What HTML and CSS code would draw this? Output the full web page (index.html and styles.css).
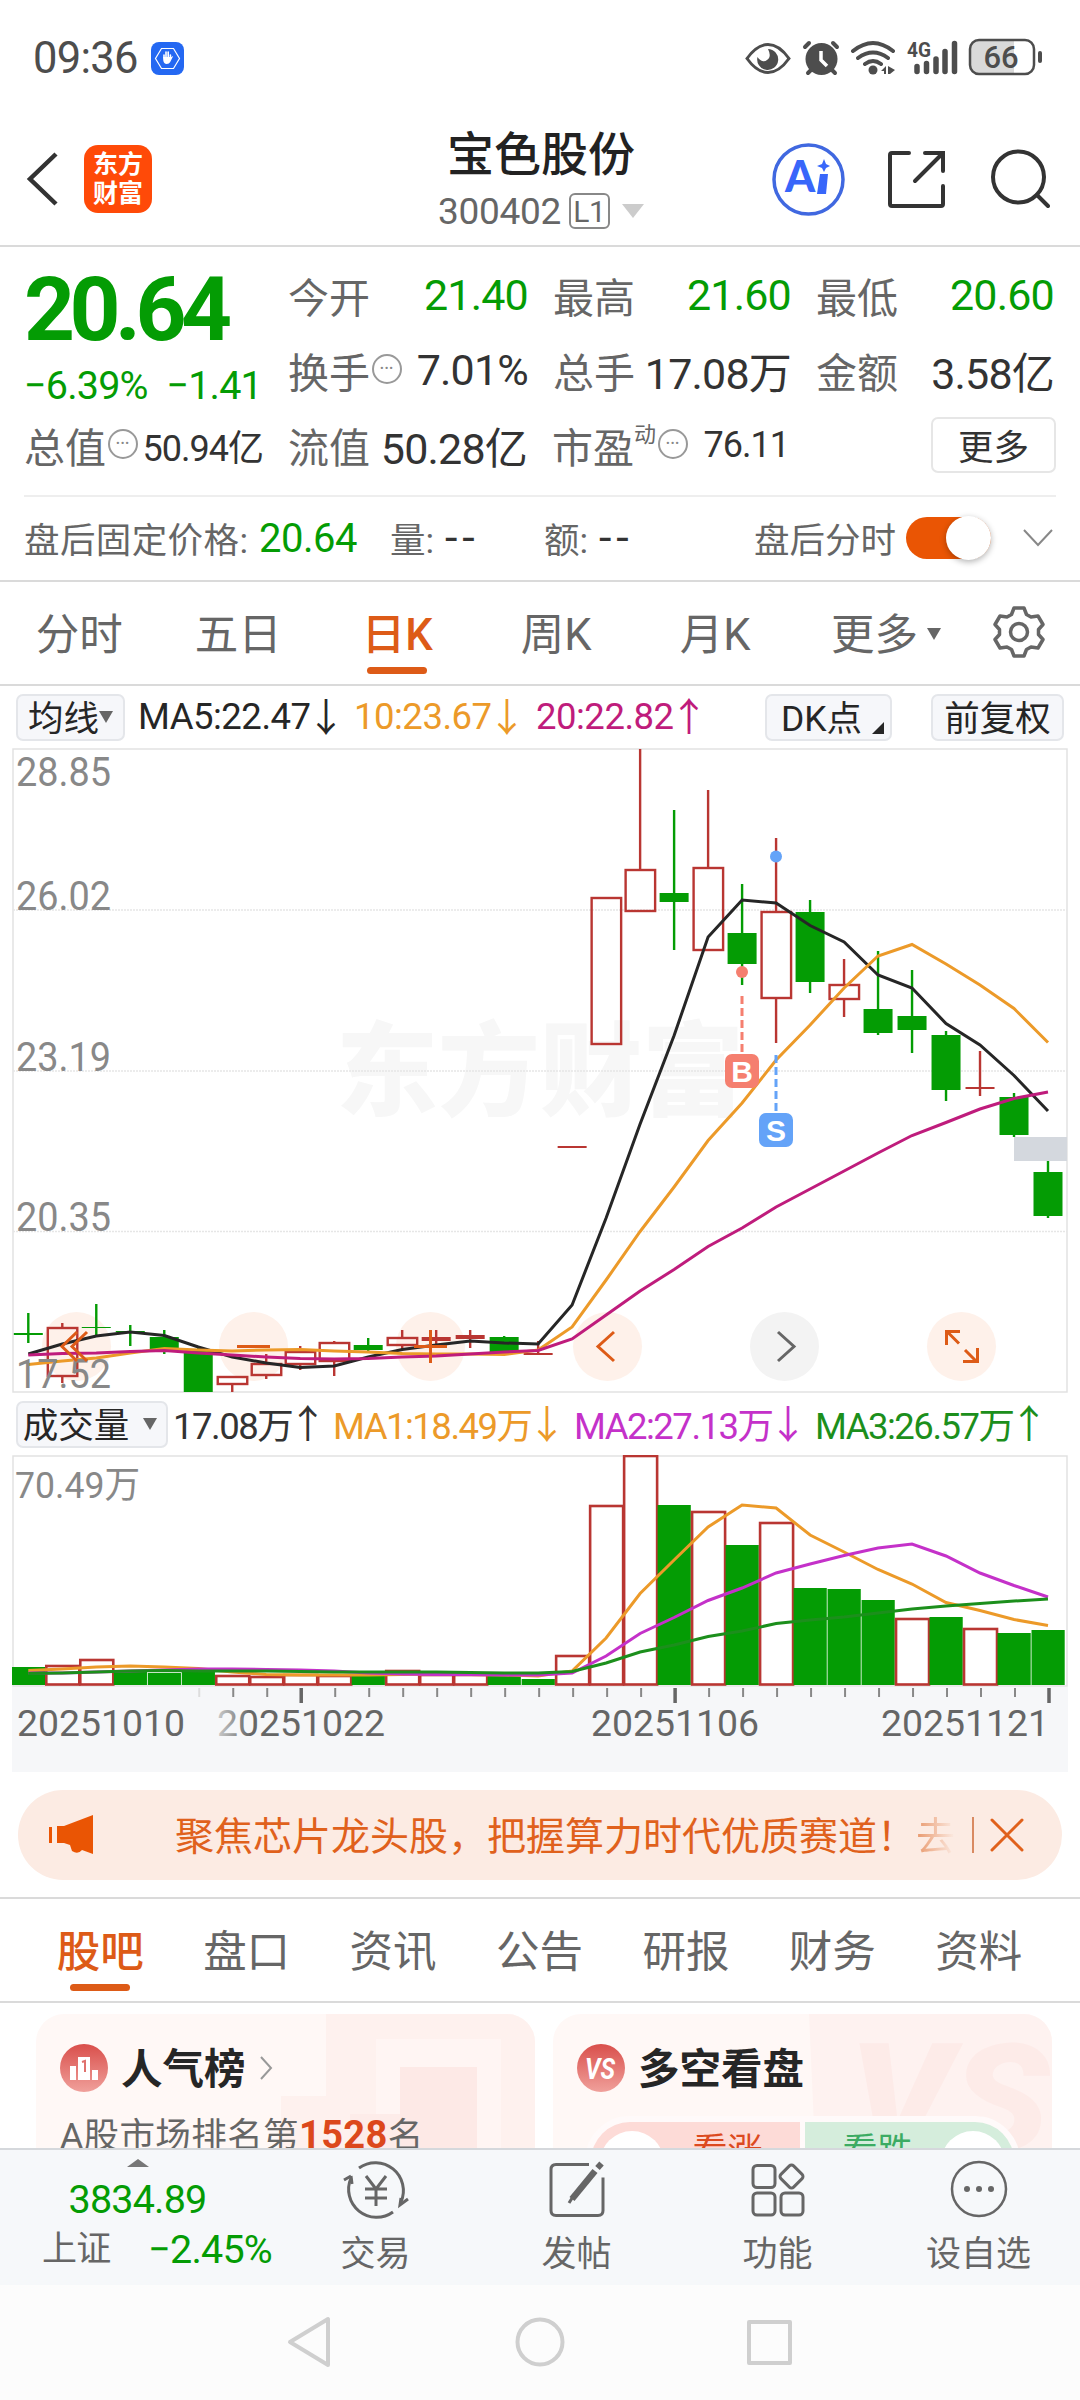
FILE: index.html
```html
<!DOCTYPE html>
<html lang="zh-CN">
<head>
  <meta charset="UTF-8">
  <meta name="viewport" content="width=device-width, initial-scale=1.0">
  <title>宝色股份 300402</title>
  <link rel="stylesheet" href="styles.css">
</head>
<body>
  <div class="status-bar">
    <span class="time">09:36</span>
    <svg class="badge" width="33" height="33" viewBox="0 0 33 33">
      <rect width="33" height="33" rx="8" fill="#2468f2"/>
      <path d="M10.500 6.500h12l6 10-6 10h-12l-6-10z" fill="none" stroke="#fff" stroke-width="1.200"/>
      <path d="M13 16v-3M15 15v-5M17.200 15v-5M19.400 16v-3" stroke="#fff" stroke-width="1.600" stroke-linecap="round"/>
      <path d="M12.200 15h8l2-1-3 6q-1 2-3.500 2-3 0-3.500-4z" fill="#fff"/>
    </svg>
    <svg class="status-icons" width="310" height="44" viewBox="740 36 310 44">
      <g fill="none" stroke="#4d4d4d" stroke-width="3">
        <path d="M747 58.500q10-14 21-14t21 14q-10 14-21 14t-21-14z"/>
        <g stroke-linecap="round" stroke-width="4">
          <path d="M805 47l4-4M837 47l-4-4M811 70l-3 3M832 70l3 3"/>
          <path d="M853 51q20-16 40 0M858 58q15-11 30 0M865 64q8-6 16 0"/>
        </g>
      </g>
      <path d="M768 49a10.500 10.500 0 1 1-10.500 8q3 5 8 4 7-3 2.500-12z" fill="#4d4d4d"/>
      <circle cx="821.500" cy="59" r="16" fill="#4d4d4d"/>
      <path d="M821 51v9l6 6" fill="none" stroke="#fff" stroke-width="3.500"/>
      <circle cx="873" cy="70" r="4.500" fill="#4d4d4d"/>
      <path d="M881 71l5-5v8h-2v-3zM888 66l7 4-5 4h-2z" fill="#4d4d4d"/>
      <text x="907" y="57" class="net" textLength="24" lengthAdjust="spacingAndGlyphs">4G</text>
      <path d="M917 66.500v5M926.500 63.500v8M936 59v12.500M945 51.500v20M954.500 43.500v28" stroke="#4d4d4d" stroke-width="5.500" stroke-linecap="round"/>
      <path d="M978 41h36v33h-36q-8 0-8-8v-17q0-8 8-8z" fill="#d9d9d9"/>
      <rect x="970" y="40" width="64" height="34" rx="9" fill="none" stroke="#4d4d4d" stroke-width="2.500"/>
      <rect x="1038" y="51" width="4" height="12" rx="2" fill="#4d4d4d"/>
      <text x="1001" y="68" text-anchor="middle" class="battery">66</text>
    </svg>
  </div>

  <header class="header">
    <svg class="back" width="34" height="56" viewBox="0 0 34 56"><path d="M30 3L4 28l26 25" fill="none" stroke="#333" stroke-width="4.500"/></svg>
    <div class="logo">东方<br>财富</div>
    <div class="stock">
      <h1>宝色股份</h1>
      <div class="code">300402<span class="level">L1</span><i class="tri"></i></div>
    </div>
    <svg class="actions" width="280" height="76" viewBox="770 141 280 76">
      <circle cx="808.500" cy="179.500" r="34.500" fill="none" stroke="#4068e0" stroke-width="3.500"/>
      <text x="785" y="192" class="ai">A</text>
      <path d="M820 174h8l-2 20h-9z" fill="#3866fa"/>
      <path d="M824 159l2 5 4 2-4 2-2 4-2-4-5-2 5-2z" fill="#3866fa"/>
      <g fill="none" stroke="#333" stroke-width="4" stroke-linecap="round">
        <path d="M909 153h-17q-2 0-2 2v49q0 2 2 2h49q2 0 2-2v-18M925 153h18v18M943 153l-28 28"/>
        <circle cx="1018.500" cy="177" r="25.500"/>
        <path d="M1037 195l11 11"/>
      </g>
    </svg>
  </header>

  <section class="quote">
    <div class="price-col">
      <div class="price green">20.64</div>
      <div class="change green"><span>−6.39%</span><span>−1.41</span></div>
    </div>
    <div class="cells">
      <div class="cell"><label>今开</label><b class="green">21.40</b></div>
      <div class="cell"><label>最高</label><b class="green">21.60</b></div>
      <div class="cell"><label>最低</label><b class="green">20.60</b></div>
      <div class="cell"><label>换手</label><i class="dots">•••</i><b>7.01%</b></div>
      <div class="cell"><label>总手</label><b>17.08万</b></div>
      <div class="cell"><label>金额</label><b>3.58亿</b></div>
    </div>
    <div class="last-row">
      <div class="cell"><label>总值</label><i class="dots">•••</i><b class="small">50.94亿</b></div>
      <div class="cell"><label>流值</label><b>50.28亿</b></div>
      <div class="cell"><label>市盈<sup>动</sup></label><i class="dots">•••</i><b class="small">76.11</b></div>
      <div class="cell"><button class="more">更多</button></div>
    </div>
  </section>

  <section class="after">
    <span class="w1">盘后固定价格:</span><b class="w2 green">20.64</b>
    <span class="w3">量: <b>--</b></span><span class="w4">额: <b>--</b></span>
    <span class="w5">盘后分时</span>
    <div class="toggle"><i></i></div>
    <svg width="30" height="18" viewBox="0 0 30 18"><path d="M1 1l14 15L29 1" fill="none" stroke="#888" stroke-width="2"/></svg>
  </section>

  <nav class="period">
    <span>分时</span><span>五日</span><span class="active">日K</span><span>周K</span><span>月K</span>
    <span class="period-more">更多<i class="tri"></i></span>
    <svg width="54" height="54" viewBox="-27 -27 54 54">
      <path d="M-5-24H5L7.500-17.500 12-15 19-16 24-7.500 19.500-2.500V2.500L24 7.500 19 16 12 15 7.500 17.500 5 24H-5L-7.500 17.500-12 15-19 16-24 7.500-19.500 2.500V-2.500L-24-7.500-19-16-12-15-7.500-17.500z" fill="none" stroke="#666" stroke-width="3.500" stroke-linejoin="round"/>
      <circle r="8.500" fill="none" stroke="#666" stroke-width="3.500"/>
    </svg>
  </nav>

  <div class="ma-row">
    <span class="chip chip-ma">均线<i class="tri"></i></span>
    <span class="ma ma5">MA5:22.47<i>↓</i></span>
    <span class="ma ma10">10:23.67<i>↓</i></span>
    <span class="ma ma20">20:22.82<i>↑</i></span>
    <span class="chip chip-dk">DK点<i class="corner"></i></span>
    <span class="chip chip-fq">前复权</span>
  </div>

  <svg id="kline" class="kline" width="1056" height="645" viewBox="12 748 1056 645"></svg>

  <div class="vol-row">
    <span class="chip chip-vol">成交量<i class="tri"></i></span>
    <span class="ma v0">17.08万<i>↑</i></span>
    <span class="ma v1">MA1:18.49万<i>↓</i></span>
    <span class="ma v2">MA2:27.13万<i>↓</i></span>
    <span class="ma v3">MA3:26.57万<i>↑</i></span>
  </div>

  <svg id="volume" class="volume" width="1056" height="232" viewBox="12 1455 1056 232"></svg>
  <svg id="dates" class="dates" width="1056" height="85" viewBox="12 1687 1056 85"></svg>

  <div class="banner">
    <svg width="46" height="42" viewBox="0 0 46 42"><path d="M1 13h3v16H1zM9 12h7L45 1v39l-11-4q-4 5-10 1l-2-6-6-2H9z" fill="#ea5504"/></svg>
    <div class="banner-text">聚焦芯片龙头股，把握算力时代优质赛道！<span>去</span></div>
    <i class="bar"></i>
    <svg width="34" height="34" viewBox="0 0 34 34"><path d="M2 2l30 30M32 2L2 32" stroke="#e0611c" stroke-width="3" stroke-linecap="round"/></svg>
  </div>

  <nav class="tabs">
    <span class="active">股吧</span><span>盘口</span><span>资讯</span><span>公告</span><span>研报</span><span>财务</span><span>资料</span>
  </nav>

  <section class="cards">
    <div class="card">
      <svg class="card-bg" width="499" height="134" viewBox="0 0 499 134">
        <path d="M290 0h209v134H245V82h45z" fill="#fef1ee"/>
        <path d="M340 25h125v109H340z" fill="#fff5f3"/>
        <path d="M364 53h77v81h-77z" fill="#fde9e6"/>
        <path d="M314 100h50v34h-50z" fill="#fdece9"/>
      </svg>
      <div class="card-head">
        <svg width="48" height="48" viewBox="0 0 48 48">
          <defs><linearGradient id="red" x2="0" y2="1"><stop stop-color="#d94f4b"/><stop offset="1" stop-color="#f0a09b"/></linearGradient></defs>
          <circle cx="24" cy="24" r="24" fill="url(#red)"/>
          <path d="M10 22h6v14h-6zM18 13h12v23H18zM32 26h6v10h-6z" fill="#fff"/>
          <path d="M22 18l3-1v11" fill="none" stroke="#e0716d" stroke-width="2"/>
        </svg>
        <h2>人气榜</h2>
        <svg width="14" height="24" viewBox="0 0 14 24"><path d="M1 1l10 11L1 23" fill="none" stroke="#999" stroke-width="2"/></svg>
      </div>
      <p>A股市场排名第<b>1528</b>名</p>
    </div>
    <div class="card">
      <svg class="card-bg" width="499" height="134" viewBox="0 0 499 134">
        <path d="M256 0h243v134H262z" fill="#fef2f0"/>
        <text x="296" y="136" class="vs-big" textLength="200" lengthAdjust="spacingAndGlyphs">VS</text>
      </svg>
      <div class="card-head">
        <svg width="48" height="48" viewBox="0 0 48 48">
          <circle cx="24" cy="24" r="24" fill="url(#red)"/>
          <text x="23" y="35" text-anchor="middle" class="vs" textLength="30" lengthAdjust="spacingAndGlyphs">VS</text>
        </svg>
        <h2>多空看盘</h2>
      </div>
      <div class="vote">
        <div class="up"><i></i>看涨</div>
        <div class="down">看跌<i></i></div>
      </div>
    </div>
  </section>

  <footer class="toolbar">
    <div class="index">
      <i class="tri-up"></i>
      <div class="green">3834.89</div>
      <div class="index-row"><span>上证</span><span class="green">−2.45%</span></div>
    </div>
    <div class="tool">
      <svg width="68" height="60" viewBox="-34 -30 68 60" fill="none" stroke="#666" stroke-width="3">
        <path d="M-17-22A28 28 0 0 1 25 12M17 22A28 28 0 0 1-25-12" />
        <path d="M-25-14l-7 4M-25-14l1 8M25 8l-1 7 8-6"/>
        <path d="M-10-14L0-1l10-13M0-1V16M-11-1H11M-11 8H11"/>
      </svg>
      交易
    </div>
    <div class="tool">
      <svg width="68" height="60" viewBox="-34 -30 68 60" fill="none" stroke="#666" stroke-width="3">
        <path d="M12-25.500h-33q-5 0-5 5v41q0 5 5 5h42q5 0 5-5v-33"/>
        <path d="M18-19L-5 9" stroke-width="6.500"/><path d="M-3 5l-5 8" stroke-width="3"/><path d="M20.500-22l4-4.500" stroke-width="6"/>
      </svg>
      发帖
    </div>
    <div class="tool">
      <svg width="68" height="60" viewBox="-34 -30 68 60" fill="none" stroke="#666" stroke-width="3">
        <rect x="-25" y="-24.500" width="22" height="22" rx="4"/>
        <rect x="-25" y="3" width="22" height="22" rx="4"/>
        <rect x="3" y="3" width="22" height="22" rx="4"/>
        <rect x="4.500" y="-22.500" width="18" height="18" rx="3" transform="rotate(45 13.500 -13.500)"/>
      </svg>
      功能
    </div>
    <div class="tool">
      <svg width="68" height="60" viewBox="-34 -30 68 60">
        <circle r="27" cy="-1" fill="none" stroke="#666" stroke-width="2.500"/>
        <g fill="#666"><circle cx="-12" cy="-1" r="3"/><circle cy="-1" r="3"/><circle cx="12" cy="-1" r="3"/></g>
      </svg>
      设自选
    </div>
  </footer>

  <div class="sys-nav">
    <svg width="520" height="60" viewBox="280 2312 520 60" fill="none" stroke="#cfcfcf" stroke-width="4" stroke-linejoin="round">
      <path d="M328 2319v46L290 2342z"/>
      <circle cx="540" cy="2342" r="22.500"/>
      <rect x="749" y="2322" width="41" height="41"/>
    </svg>
  </div>

  <script src="chart.js"></script>
</body>
</html>
```
FILE: chart.js
```js
const RED = "#b93632";
const GREEN = "#049c04";
const x = i => 28.300 + i * 33.990;

// type, body top, body bottom, high, low
const candles = [
  ["g", 1333, 1335, 1313, 1343], ["r", 1328, 1376, 1323, 1383], ["g", 1327, 1328, 1304, 1337],
  ["g", 1331, 1332, 1325, 1346], ["g", 1337, 1350, 1330, 1354], ["g", 1351, 1392, 1347, 1392],
  ["r", 1377, 1384, 1376, 1392], ["r", 1364, 1375, 1354, 1379], ["r", 1352, 1364, 1346, 1370],
  ["r", 1343, 1361, 1341, 1376], ["g", 1345, 1350, 1338, 1352], ["r", 1338, 1345, 1330, 1349],
  ["f", 1337, 1341, 1330, 1346], ["f", 1335, 1339, 1330, 1348], ["g", 1337, 1352, 1336, 1352],
  ["f", 1353, 1355, 1341, 1355], ["f", 1146, 1148, 1146, 1148], ["r", 898, 1044, 898, 1044],
  ["r", 870, 911, 749, 911], ["g", 893, 902, 810, 950], ["r", 868, 950, 790, 950],
  ["g", 933, 964, 884, 985], ["r", 912, 998, 838, 1043], ["g", 912, 982, 900, 993],
  ["r", 985, 999, 959, 1017], ["g", 1009, 1033, 951, 1035], ["g", 1016, 1030, 970, 1053],
  ["g", 1035, 1090, 1031, 1101], ["f", 1087, 1089, 1051, 1096], ["g", 1097, 1135, 1093, 1137],
  ["g", 1172, 1216, 1161, 1218]
];
const ma5 = [1354, 1344, 1336, 1332, 1335.500, 1347, 1357, 1363, 1367.500, 1366, 1357, 1349.500, 1345, 1341, 1343, 1344, 1305, 1218, 1124, 1035.500, 937, 900, 903, 925.500, 942, 975, 988, 1023.500, 1045, 1075.500, 1111];
const ma10 = [1364.500, 1361, 1358, 1353, 1348.500, 1350, 1351, 1350, 1349.500, 1351, 1352, 1353.500, 1354, 1354, 1354.500, 1350, 1327, 1280, 1231.500, 1187, 1140.500, 1103, 1060, 1025, 988, 956, 944.500, 964, 985, 1008.500, 1042.500];
const ma20 = [1355, 1353.500, 1353, 1351.500, 1350.500, 1353, 1355, 1357, 1358.500, 1359, 1358.500, 1357, 1356, 1354, 1352, 1350.500, 1339, 1315, 1291, 1269.500, 1246.500, 1228, 1207, 1189, 1171, 1153, 1135.500, 1122.500, 1109, 1098.500, 1092];

const volType = "grrgggrrrrgrrrggrrrgrgrgggrgrgg";
const vol = [1667, 1666, 1660, 1672, 1673, 1672, 1676, 1677, 1675, 1676, 1675, 1671, 1675, 1675, 1674, 1679, 1656, 1506, 1456, 1505, 1512, 1545, 1523, 1588, 1589, 1600, 1619, 1617, 1629, 1633, 1630];
const vma1 = [1670.500, 1669, 1667, 1666, 1667, 1668.500, 1672, 1674.500, 1675, 1675, 1675, 1674.500, 1674, 1674.500, 1675, 1676, 1671, 1638, 1593.500, 1560, 1527, 1505, 1508, 1535, 1552, 1569.500, 1584, 1602.500, 1610.500, 1619.500, 1625.500];
const vma2 = [1673, 1673, 1672, 1671, 1670, 1669, 1669, 1669.500, 1670, 1671, 1673, 1674, 1674.500, 1674.500, 1675, 1675, 1673, 1656, 1633.500, 1617.500, 1600.500, 1588, 1573, 1564, 1555.500, 1548, 1544, 1556, 1573, 1585.500, 1597];
const vma3 = [1673.500, 1673, 1672, 1671, 1670.500, 1671, 1671, 1671, 1671.500, 1672, 1672, 1672, 1672, 1672.500, 1673, 1673, 1671.500, 1663, 1652, 1645, 1636.500, 1631, 1623.500, 1620, 1617, 1613, 1609, 1606, 1603.500, 1601, 1599];

function line(data, color, w) {
  const pts = data.map((y, i) => x(i).toFixed(1) + "," + y).join(" ");
  return `<polyline points="${pts}" fill="none" stroke="${color}" stroke-width="${w}"/>`;
}

function label(px, y, text, len, cls) {
  return `<text x="${px}" y="${y}" textLength="${len}" lengthAdjust="spacingAndGlyphs" class="${cls || "axis"}">${text}</text>`;
}

function drawKline() {
  let s = `<rect x="13" y="749" width="1054" height="643" fill="#fff" stroke="#e2e2e2" stroke-width="1.500"/>`;
  s += label(336, 1108, "东方财富", 408, "watermark");
  [910, 1071, 1231.500].forEach(y => {
    s += `<path d="M13 ${y}H1067" stroke="#e6e6e6" stroke-width="1.500" stroke-dasharray="2 1"/>`;
  });
  [76.500, 253.500, 430.500, 607.500, 784.500, 961.500].forEach((cx, i) => {
    s += `<circle cx="${cx}" cy="1346.500" r="34.500" fill="${i === 4 ? "#f3f3f3" : "#fef1ea"}"/>`;
  });
  candles.forEach(([t, top, bottom, high, low], i) => {
    const c = t === "g" ? GREEN : RED;
    const cx = x(i);
    s += `<path d="M${cx} ${high}V${top}M${cx} ${bottom}V${low}" stroke="${c}" stroke-width="2.400"/>`;
    if (t === "r") {
      s += `<rect x="${cx - 14.500}" y="${top}" width="29.500" height="${bottom - top}" fill="none" stroke="${c}" stroke-width="2.400"/>`;
    } else {
      s += `<rect x="${cx - 14.500}" y="${top}" width="29" height="${bottom - top}" fill="${c}"/>`;
    }
  });
  s += line(ma5, "#262626", 3) + line(ma10, "#ec9a29", 3) + line(ma20, "#bf1c7c", 3);
  s += label(16, 786, "28.85", 95) + label(16, 910, "26.02", 95) + label(16, 1071, "23.19", 95) + label(16, 1231, "20.35", 95) + label(16, 1388, "17.52", 95);
  // trade marks
  s += `<circle cx="742" cy="972" r="6" fill="#f57f6f"/><path d="M742 996V1054" stroke="#f57f6f" stroke-width="3" stroke-dasharray="8 4"/>
    <rect x="725" y="1054" width="34" height="34" rx="7" fill="#f57f6f"/><text x="742" y="1082" text-anchor="middle" class="mark">B</text>
    <circle cx="776" cy="856.500" r="6" fill="#64a3f8"/><path d="M776 1055V1113" stroke="#64a3f8" stroke-width="3" stroke-dasharray="8 4"/>
    <rect x="759" y="1113" width="34" height="34" rx="7" fill="#64a3f8"/><text x="776" y="1141" text-anchor="middle" class="mark">S</text>
    <rect x="1014" y="1137" width="53" height="24" fill="#d4d8de"/>`;
  // control buttons
  s += `<g fill="none" stroke="#dd5b17" stroke-width="3"><path d="M77 1332l-15 14.500 15 14.500M87 1332l-15 14.500 15 14.500"/>
    <path d="M237 1346.500h33M414 1346.500h33M430.500 1330v33"/>
    <path d="M614 1332l-16 14.500 16 14.500"/><path d="M778 1332l16 14.500-16 14.500" stroke="#666"/>
    <path d="M959 1343.500l-12-12M946.500 1345v-13.500h13.500M965 1350l12 12M963 1361.500h14.500v-13.500"/></g>`;
  document.getElementById("kline").innerHTML = s;
}

function drawVolume() {
  let s = `<rect x="13" y="1456" width="1054" height="230" fill="#fff" stroke="#e2e2e2" stroke-width="1.500"/>`;
  s += label(15, 1498, "70.49万", 125);
  vol.forEach((top, i) => {
    const cx = x(i);
    if (volType[i] === "g") {
      s += `<rect x="${cx - 16.500}" y="${top}" width="33.200" height="${1685 - top}" fill="${GREEN}"/>`;
    } else {
      s += `<rect x="${cx - 16}" y="${top}" width="33" height="${1684.500 - top}" fill="none" stroke="${RED}" stroke-width="2.600"/>`;
    }
  });
  s += line(vma1, "#ec9a29", 3) + line(vma2, "#c431c9", 3) + line(vma3, "#1c8f1c", 3);
  document.getElementById("volume").innerHTML = s;
}

function drawDates() {
  let s = `<defs><linearGradient id="fade"><stop stop-color="#ccc"/><stop offset="0.200" stop-color="#666"/></linearGradient></defs>`;
  for (let i = 5; i < 31; i++) {
    const big = i === 8 || i === 19 || i === 30;
    const c = i === 5 ? "#ddd" : "#888";
    s += `<path d="M${x(i) + 1} 1688v${big ? 15 : 9}" stroke="${big ? "#666" : c}" stroke-width="${big ? 3.500 : 2}"/>`;
  }
  s += label(17, 1736, "20251010", 168, "date") + label(217, 1736, "20251022", 168, "date faded");
  s += label(591, 1736, "20251106", 168, "date") + label(881, 1736, "20251121", 168, "date");
  document.getElementById("dates").innerHTML = s;
}

drawKline();
drawVolume();
drawDates();
```
FILE: styles.css
```css
* {
  box-sizing: border-box;
}
body {
  margin: 0;
  width: 1080px;
  height: 2400px;
  overflow: hidden;
  background: #fff;
  color: #333;
  font-family: Roboto, "Noto Sans CJK SC", sans-serif;
  white-space: nowrap;
}
svg {
  display: block;
  flex: none;
}
i {
  font-style: normal;
}
h1, h2, p {
  margin: 0;
}
.green {
  color: #049c04;
}
.tri {
  display: inline-block;
  border: 7px solid transparent;
  border-top: 12px solid #666;
  border-bottom: 0;
}

/* status bar + header */
.status-bar {
  display: flex;
  align-items: center;
  height: 100px;
  padding: 16px 30px 0 33px;
}
.time {
  width: 118px;
  font-size: 43.500px;
  letter-spacing: -0.7px;
  color: #4d4d4d;
}
.status-icons {
  margin-left: auto;
}
.net {
  font-size: 21px;
  font-weight: bold;
  fill: #4d4d4d;
}
.battery {
  font-size: 31px;
  font-weight: 500;
  fill: #4d4d4d;
}
.header {
  display: flex;
  align-items: center;
  height: 147px;
  padding: 12px 30px 0 26px;
  border-bottom: 2px solid #dadada;
}
.logo {
  width: 68px;
  height: 68px;
  margin-left: 24px;
  padding-top: 5px;
  border-radius: 14px;
  background: #ff4a08;
  color: #fff;
  font-size: 25px;
  font-weight: bold;
  line-height: 29px;
  text-align: center;
}
.stock {
  flex: 1;
  padding-left: 160px;
  text-align: center;
}
h1 {
  font-size: 47px;
  font-weight: 500;
  line-height: 62px;
  color: #222;
}
.code {
  display: flex;
  align-items: center;
  justify-content: center;
  height: 44px;
  margin-top: 3px;
  font-size: 37px;
  letter-spacing: -0.3px;
  color: #666;
}
.level {
  width: 41px;
  height: 36px;
  margin: 0 12px 0 8px;
  border: 2px solid #888;
  border-radius: 6px;
  font-size: 30px;
  line-height: 33px;
}
.code .tri {
  border-width: 14px 11px 0;
  border-top-color: #ccc;
}
.ai {
  font-family: Lato, sans-serif;
  font-size: 43px;
  font-weight: 900;
  fill: #3866fa;
}

/* quote */
.quote {
  display: grid;
  grid-template-columns: 264px 1fr;
  align-content: start;
  height: 249px;
  padding: 12px 24px 0;
}
.price {
  height: 82px;
  font-size: 89px;
  font-weight: bold;
  line-height: 102px;
  letter-spacing: -5.500px;
}
.change {
  display: flex;
  justify-content: space-between;
  width: 238px;
  height: 68px;
  padding-top: 20px;
  font-size: 39.500px;
  line-height: 50px;
  letter-spacing: -0.8px;
}
.cells, .last-row {
  display: grid;
  grid-template-columns: 240px 238px 238px;
  column-gap: 25px;
  grid-auto-rows: 75px;
}
.last-row {
  grid-column: 1 / 3;
  grid-template-columns: 239px 239px 237px 242px;
}
.cell {
  display: flex;
  align-items: center;
  padding-bottom: 3px;
}
.cell label {
  font-size: 41px;
  color: #666;
}
.cell b {
  margin-left: auto;
  font-size: 43px;
  font-weight: normal;
  letter-spacing: -0.8px;
}
.cell b.small {
  font-size: 36px;
  letter-spacing: -1px;
}
.cell sup {
  font-size: 22px;
  line-height: 0;
  vertical-align: 21px;
}
.dots {
  flex: none;
  width: 30px;
  height: 30px;
  margin: -3px 0 0 2px;
  border: 2px solid #999;
  border-radius: 50%;
  font-size: 11px;
  line-height: 25px;
  text-align: center;
  letter-spacing: 1px;
  color: #888;
}
.more {
  width: 125px;
  height: 56px;
  margin-left: auto;
  padding: 0 0 4px;
  border: 2px solid #e6e6e6;
  border-radius: 7px;
  background: #fff;
  color: #333;
  font-family: inherit;
  font-size: 35.500px;
}
.after {
  display: flex;
  align-items: center;
  height: 85px;
  margin: -1px 24px 0;
  padding-bottom: 1px;
  border-top: 2px solid #eee;
  font-size: 35.500px;
  color: #666;
}
.after span {
  margin-top: -2px;
}
.after b {
  font-weight: normal;
  color: #333;
}
.after b.green {
  color: #049c04;
  font-size: 40px;
  letter-spacing: -0.5px;
}
.w1 {
  width: 235px;
  letter-spacing: 0.400px;
}
.w2 {
  width: 131px;
}
.w3 {
  width: 154px;
}
.w4 {
  width: 210px;
}
.w3 b, .w4 b {
  margin-left: 2px;
  font-size: 45px;
  line-height: 0;
  letter-spacing: 5px;
}
.w5 {
  width: 152px;
}
.toggle {
  width: 85px;
  height: 42px;
  margin-right: 32px;
  border-radius: 21px;
  background: #ea5504;
}
.toggle i {
  display: block;
  width: 45px;
  height: 44px;
  margin: -1px 0 0 40px;
  border-radius: 50%;
  background: #fff;
  box-shadow: 0 2px 6px rgba(0, 0, 0, 0.3);
}

/* period tabs */
.period {
  display: flex;
  align-items: center;
  height: 106px;
  padding-bottom: 3px;
  border-top: 2px solid #dadada;
  border-bottom: 2px solid #dadada;
  font-size: 43.500px;
  color: #666;
}
.period span {
  position: relative;
  width: 159.500px;
  margin-left: -0.5px;
  text-align: center;
}
.period .period-more {
  width: 197px;
  padding-right: 14px;
}
.period-more .tri {
  margin: 0 0 10px 9px;
}
.active {
  color: #dd5b17;
  font-weight: 500;
}
.active::after {
  content: "";
  position: absolute;
  bottom: -11px;
  left: 50%;
  width: 60px;
  height: 7px;
  margin-left: -30px;
  border-radius: 4px;
  background: #dd5b17;
}

/* indicator rows */
.ma-row, .vol-row {
  display: flex;
  align-items: center;
  height: 62px;
  padding: 0 16px;
}
.chip {
  display: flex;
  align-items: center;
  justify-content: center;
  height: 47px;
  padding-bottom: 4px;
  border: 2px solid #e4e6ea;
  border-radius: 7px;
  background: #f6f7fa;
  font-size: 35.500px;
  color: #262626;
}
.chip .tri {
  margin-top: 4px;
}
.chip-ma {
  width: 109px;
}
.chip-dk {
  position: relative;
  width: 127px;
  margin-left: auto;
  padding-right: 14px;
}
.corner {
  position: absolute;
  right: 6px;
  bottom: 5px;
  border-bottom: 12px solid #262626;
  border-left: 12px solid transparent;
}
.chip-fq {
  width: 133px;
  margin-left: 39px;
}
.ma {
  display: flex;
  align-items: center;
  height: 48px;
  padding-bottom: 2px;
  font-size: 36.500px;
  letter-spacing: -0.5px;
}
.ma i {
  width: 24px;
  margin: -4px 0 0 -4px;
  font-family: "Noto Sans CJK SC", sans-serif;
  font-size: 39px;
  letter-spacing: -6px;
}
.ma5 {
  width: 216px;
  margin-left: 13px;
  color: #262626;
}
.ma10 {
  width: 182px;
  color: #ec9a29;
}
.ma20 {
  width: 180px;
  color: #bf1c7c;
}
.kline {
  margin-left: 12px;
}
.chip-vol {
  width: 152px;
  padding-right: 4px;
}
.chip-vol .tri {
  margin-left: 14px;
}
.vol-row .ma {
  letter-spacing: -1.500px;
}
.v0 {
  width: 160px;
  margin-left: 5px;
}
.v1 {
  width: 241px;
  color: #ec9a29;
}
.v2 {
  width: 241px;
  color: #c431c9;
}
.v3 {
  color: #1c8f1c;
}
.volume, .dates {
  margin-left: 12px;
}
.dates {
  background: #f6f7f9;
}
.axis {
  font-size: 40px;
  fill: #888;
}
.volume .axis {
  font-size: 37px;
}
.date {
  font-size: 37px;
  fill: #666;
}
.faded {
  fill: url(#fade);
}
.watermark {
  font-size: 102px;
  font-weight: 900;
  fill: #f7f7f7;
}
.mark {
  font-family: "Liberation Sans", sans-serif;
  font-size: 30px;
  font-weight: bold;
  fill: #fff;
}

/* banner */
.banner {
  display: flex;
  align-items: center;
  width: 1044px;
  height: 90px;
  margin: 18px 18px 17px;
  padding: 0 38px 0 30px;
  border-radius: 45px;
  background: #fcebe3;
}
.banner-text {
  width: 780px;
  margin: -4px 0 0 81px;
  overflow: hidden;
  font-size: 39px;
  color: #e0611c;
}
.banner-text span {
  background: linear-gradient(90deg, #e8986c, #fcebe3);
  -webkit-background-clip: text;
  color: transparent;
}
.bar {
  width: 2px;
  height: 36px;
  margin: 0 16px 0 auto;
  background: #d98a62;
}

/* content tabs */
.tabs {
  display: flex;
  align-items: center;
  height: 106px;
  padding: 0 28px 4px 27px;
  border-top: 2px solid #dadada;
  border-bottom: 2px solid #dadada;
  font-size: 43.500px;
  color: #666;
}
.tabs span {
  position: relative;
  flex: 1;
  text-align: center;
}
.cards {
  display: flex;
  gap: 18px;
  height: 145px;
  padding: 11px 28px 0 36px;
  overflow: hidden;
}
.card {
  position: relative;
  width: 499px;
  height: 220px;
  padding: 30px 24px 0;
  border-radius: 28px;
  background: #fff8f6;
  overflow: hidden;
}
.card-bg {
  position: absolute;
  top: 0;
  left: 0;
}
.card-head {
  position: relative;
  display: flex;
  align-items: center;
  height: 48px;
}
h2 {
  margin: 0 14px 4px 13px;
  font-size: 41.500px;
  font-weight: bold;
  color: #262626;
}
.card p {
  position: relative;
  margin-top: 17px;
  font-size: 35.500px;
  line-height: 52px;
  letter-spacing: 0.400px;
  color: #666;
}
.card p b {
  font-size: 38px;
  color: #dc481c;
}
.vs {
  font-size: 30px;
  font-style: italic;
  font-weight: bold;
  fill: #fff;
}
.vs-big {
  font-size: 150px;
  font-style: italic;
  font-weight: 900;
  fill: #fdebe8;
}
.vote {
  position: relative;
  display: flex;
  gap: 5px;
  width: 435px;
  height: 90px;
  margin: 24px 0 0 8px;
  border: 6px solid #fffafa;
  border-radius: 50px;
  background: #fffafa;
  font-size: 35px;
  line-height: 52px;
  overflow: hidden;
}
.vote div {
  display: flex;
  flex: 1;
  justify-content: space-between;
  height: 90px;
  padding: 4px 9px;
}
.vote i {
  width: 64px;
  height: 64px;
  margin-top: 5px;
  border-radius: 50%;
  background: #fff;
}
.vote .up {
  padding-right: 37px;
  background: #fddbd7;
  color: #dc4a20;
}
.vote .down {
  padding-left: 38px;
  background: #d5eddc;
  color: #3cab63;
}

/* bottom */
.toolbar {
  display: flex;
  height: 137px;
  border-top: 2px solid #d5d8dc;
  background: #f6f8fa;
  color: #666;
}
.index {
  width: 275px;
  font-size: 39.500px;
  line-height: 48px;
  letter-spacing: -0.8px;
  text-align: center;
}
.tri-up {
  display: block;
  width: 0;
  margin: 9px 0 9px 127px;
  border: 11px solid transparent;
  border-top: 0;
  border-bottom: 8px solid #777;
}
.index-row {
  display: flex;
  justify-content: space-between;
  padding: 2px 3px 0 42px;
}
.index-row span:first-child {
  font-size: 35px;
}
.tool {
  display: flex;
  flex-direction: column;
  align-items: center;
  width: 201px;
  padding-top: 10px;
  font-size: 35px;
  line-height: 70px;
}
.sys-nav {
  display: flex;
  justify-content: center;
  height: 115px;
  padding-top: 27px;
  background: #fcfcfc;
}
```
